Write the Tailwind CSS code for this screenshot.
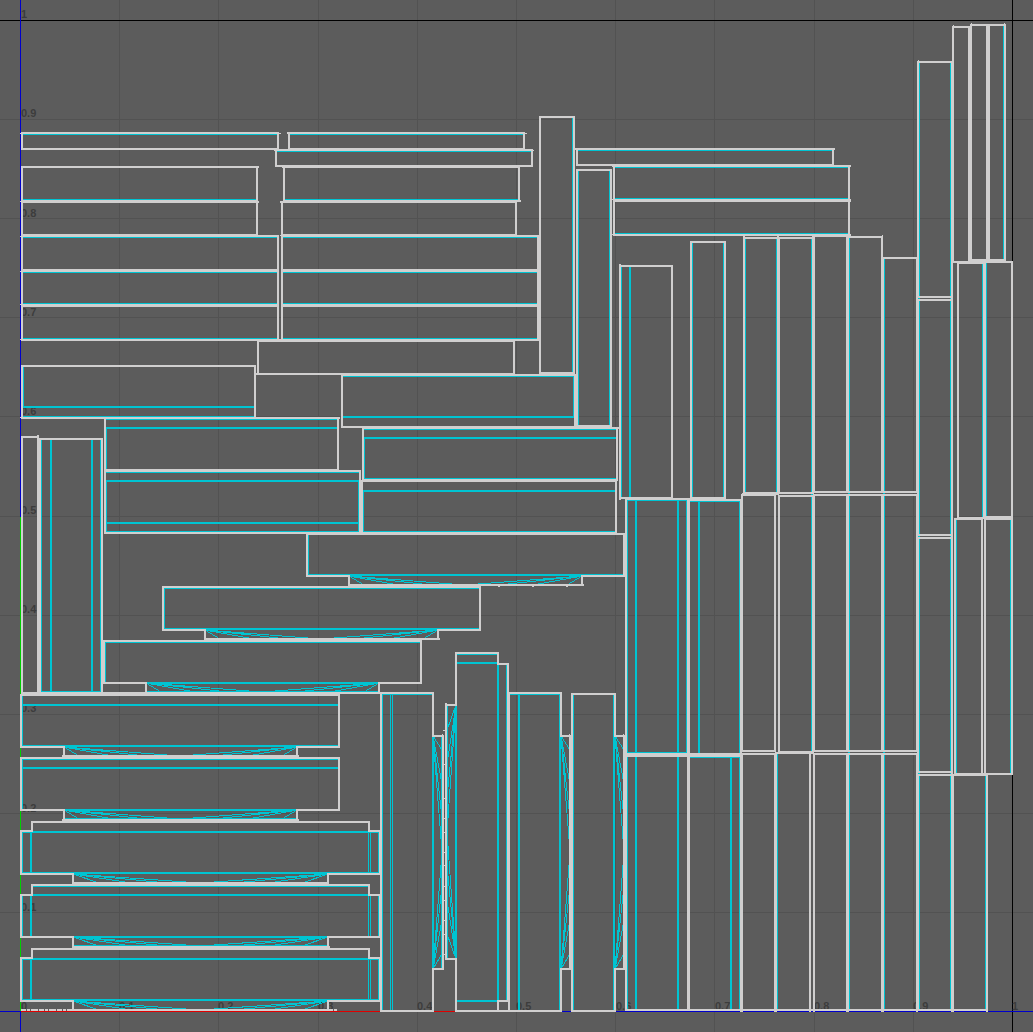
<!DOCTYPE html>
<html lang="en">
<head>
<meta charset="utf-8">
<meta name="viewport" content="width=device-width, initial-scale=1">
<title>UV Editor</title>
<script src="https://cdn.jsdelivr.net/npm/@tailwindcss/browser@4"></script>
</head>
<body class="bg-[#5c5c5c]">
<main class="w-full">
<svg class="block h-auto w-full" viewBox="0 0 1033 1032" role="img" aria-label="UV layout" shape-rendering="crispEdges" fill="none">
  <defs>
    <path id="fan" d="M0 0L15 9M0 0L49 9M0 0L82 9M0 0L116 9M0 0L40 4M233 0L218 9M233 0L184 9M233 0L150 9M233 0L116 9M233 0L193 4"/>
    <path id="fan-wide" d="M0 0L26 9M0 0L59 9M0 0L94 9M0 0L127 9M0 0L40 3M255 0L229 9M255 0L195 9M255 0L161 9M255 0L127 9M255 0L215 3"/>
    <path id="fan-side" d="M0 0L9 14M0 0L9 48M0 0L9 82M0 0L9 116M0 0L4 40M0 233L9 218M0 233L9 184M0 233L9 150M0 233L9 116M0 233L4 193"/>
  </defs>

  <!-- grid -->
  <path class="fill-[#525252]" d="M119 0h1v1032h-1zM218 0h1v1032h-1zM318 0h1v1032h-1zM417 0h1v1032h-1zM516 0h1v1032h-1zM615 0h1v1032h-1zM714 0h1v1032h-1zM814 0h1v1032h-1zM913 0h1v1032h-1zM0 119h1033v1h-1033zM0 218h1033v1h-1033zM0 317h1033v1h-1033zM0 416h1033v1h-1033zM0 516h1033v1h-1033zM0 615h1033v1h-1033zM0 714h1033v1h-1033zM0 813h1033v1h-1033zM0 912h1033v1h-1033z"/>
  <path class="fill-black" d="M0 20h1033v1h-1033zM1012 0h1v1032h-1z"/>

  <!-- axis labels -->
  <g class="fill-[#3c3c3c] font-['Liberation_Sans',sans-serif] text-[11px] font-bold" stroke="none">
    <text x="21" y="18">1</text><text x="21" y="117">0.9</text><text x="21" y="217">0.8</text><text x="21" y="316">0.7</text><text x="21" y="415">0.6</text><text x="21" y="514">0.5</text><text x="21" y="613">0.4</text><text x="21" y="712">0.3</text><text x="21" y="812">0.2</text><text x="21" y="911">0.1</text>
    <text x="21" y="1010">0</text><text x="119" y="1010">0.1</text><text x="218" y="1010">0.2</text><text x="318" y="1010">0.3</text><text x="417" y="1010">0.4</text><text x="516" y="1010">0.5</text><text x="616" y="1010">0.6</text><text x="715" y="1010">0.7</text><text x="814" y="1010">0.8</text><text x="913" y="1010">0.9</text><text x="1012" y="1010">1</text>
  </g>

  <!-- axes -->
  <path class="fill-[#0000cc]" d="M20 0h1v517h-1zM20 1011h1v21h-1zM0 1011h20v1h-20zM517 1011h516v1h-516z"/>
  <path class="fill-[#00d000]" d="M20 517h1v494h-1z"/>
  <path class="fill-[#e00000]" d="M21 1011h496v1h-496z"/>

  <!-- interior edges -->
  <g class="stroke-[#00c4d2]" stroke-width="2">
    <path d="M22 134H278M22 200H257M22 237H278M22 272H278M22 304H278M22 339H278M289 134H524M276 151H532M284 200H519M282 237H538M282 272H538M282 304H538M282 339H538M573 117V373M577 150H833M578 170V426M610 170V426M614 167H849M614 199H849M614 234H849"/>
    <path d="M23 366V407M22 407H255M22 417H255M105 419H338M105 428H338M106 428V470M105 472H360M105 481H360M105 523H360M105 532H360M106 481V533M359 481V533M342 376H575M342 417H575M574 375V417M363 429H617M363 438H617M363 479H617M364 438V480M362 491H616M362 532H616M363 491V533"/>
    <path d="M41 439V693M51 439V692M92 439V692M101 439V693M40 692H102M308 534V576M307 575H624M164 587V630M163 588H480M163 629H480M105 641V683M104 642H421M104 683H421M146 692H379"/>
    <path d="M22 695V747M21 705H339M21 746H339M22 758V810M21 759H339M21 768H339M21 810H339M64 819H297"/>
    <path d="M21 832H380M22 832V874M31 832V874M369 832V874M370 832V874M379 832V874M21 873H380M32 886H369M21 895H380M22 895V937M31 895V937M369 895V937M370 895V937M379 895V937M21 937H380M73 946H328M21 959H380M22 959V1001M31 959V1001M369 959V1001M370 959V1001M379 959V1001M21 1000H380"/>
    <path d="M382 693V1011M391 693V1011M392 693V1011M381 694H433M433 736V970M442 736V969M456 654H498M456 663H498M456 705V959M447 705V959M498 664V1001M507 664V1001M456 1001H498M509 694H561M519 693V1011M560 694V1011M573 694V1011M614 694V1011"/>
    <path d="M621 266V498M630 266V498M692 242V498M724 242V498M745 238V493M777 238V493M812 238V752M849 237V1010M884 258V1010M627 499V1010M636 499V1010M678 499V1010M687 499V754M626 500H688M626 753H688M689 501H741M699 500V754M740 500V1010M689 757H741M731 756V1010M777 754V1010"/>
    <path d="M919 62V1010M951 62V1010M1004 25V260M983 263V517M986 263V517M956 519V774M1011 519V774M986 775V1010"/>
  </g>
  <path class="fill-[#5c5c5c]" d="M391 695h1v315h-1zM369 833h1v39h-1zM369 896h1v40h-1zM369 960h1v39h-1z"/>

  <!-- triangulated skirts -->
  <g class="stroke-[#00c4d2]" stroke-width="1">
    <use href="#fan" x="349" y="576"/><use href="#fan" x="205" y="630"/><use href="#fan" x="146" y="683"/><use href="#fan" x="64" y="747"/><use href="#fan" x="64" y="810"/>
    <use href="#fan-wide" x="73" y="874"/><use href="#fan-wide" x="73" y="937"/><use href="#fan-wide" x="73" y="1001"/>
    <use href="#fan-side" x="433" y="736"/><use href="#fan-side" x="561" y="736"/><use href="#fan-side" x="615" y="736"/>
    <path d="M456 705L447 730M456 705L447 764M456 705L447 798M456 705L447 832M456 705L452 745M456 959L447 934M456 959L447 900M456 959L447 865M456 959L447 832M456 959L452 919"/>
  </g>

  <!-- shell borders -->
  <g class="stroke-[#d0cfcf]" stroke-width="2">
    <path d="M22 133H278V149H22ZM22 167H257V201H22ZM22 202H257V235H22ZM22 236H278V270H22ZM22 271H278V305H22ZM22 306H278V340H22ZM289 133H524V149H289ZM276 150H532V166H276ZM284 167H519V201H284ZM282 202H516V235H282ZM282 236H538V270H282ZM282 271H538V305H282ZM282 306H538V340H282ZM278 340H282"/>
    <path d="M540 117H574V373H540ZM577 149H833V165H577ZM577 170H611V426H577ZM614 166H849V200H614ZM614 201H849V235H614ZM258 341H514V374H258ZM22 366H255V418H22ZM105 418H338V470H105ZM255 418H340M255 374H342M105 471H360V533H105ZM342 375H575V427H342ZM574 149H577M575 427H612M363 428H617V480H363ZM617 428H620M362 481H616V533H362Z"/>
    <path d="M22 437H38V693H22ZM40 439H102V693H40ZM307 534H624V576H582V585H349V576H307ZM163 587H480V630H438V639H205V630H163ZM104 641H421V683H379V693H146V683H104ZM102 683H104V641M21 693H381"/>
    <path d="M21 695H339V747H297V756H64V747H21ZM21 758H339V810H297V820H64V810H21ZM32 822H369V831H380V874H328V883H73V874H21V831H32ZM32 885H369V895H380V937H328V947H73V937H21V895H32ZM32 949H369V958H380V1001H328V1010H73V1001H21V958H32Z"/>
    <path d="M381 693H433V736H443V969H433V1011H381ZM456 653H498V664H508V1001H498V1011H456V959H446V705H456ZM498 1001V1011H509V693H561V736H570V969H561V1011H509M572 694H615V736H624V969H615V1011H572ZM571 736V969M625 736V969"/>
    <path d="M620 266H672V498H620ZM691 242H725V498H691ZM744 238H778V493H744ZM779 238H813V493H779ZM814 236H847V492H814ZM848 237H882V492H848ZM883 258H917V492H883ZM744 235V238M778 235V238M813 235V238"/>
    <path d="M626 499H688V754H626ZM689 500H741V754H689ZM742 495H775V751H742ZM779 496H813V752H779ZM814 495H847V751H814ZM848 495H882V751H848ZM883 495H917V751H883ZM742 494H779M672 499H691"/>
    <path d="M626 756H688V1010H626ZM689 756H741V1010H689ZM742 754H775V1010H742ZM776 753H810V1010H776ZM814 754H847V1010H814ZM848 754H882V1010H848ZM883 754H917V1010H883ZM810 1010H814M810 753H814"/>
    <path d="M918 62H952V297H918ZM918 300H952V535H918ZM918 538H952V772H918ZM918 775H952V1010H918ZM953 27H969V262H953ZM971 25H987V260H971ZM989 25H1005V260H989ZM970 27V262M988 25V262M953 262H1012V517H985V262M958 263H984V518H958ZM955 519H982V774H955ZM985 519H1012V774H985ZM953 775H987V1010H953ZM982 774H985M952 297V300M952 535V538M952 772V775"/>
    <path d="M741 1010V1012M742 1010V1012M775 1010V1012M776 1010V1012M810 1010V1012M814 1010V1012M847 1010V1012M848 1010V1012M882 1010V1012M883 1010V1012M917 1010V1012M952 1010V1012M953 1010V1012M987 1010V1012"/>
    <path stroke-dasharray="5 1 3 1 7 1" d="M21 1010H72M328 1010H337"/>
    <path d="M444 730V731M444 764V765M444 798V799M444 818V819M444 832V833M444 852V853M444 865V866M444 886V887M444 900V901M444 920V921M444 934V935M444 954V955M499 585V587M533 585V587M567 585V587"/>
  </g>

  <!-- border overshoot at shell corners -->
  <path class="fill-[#d0cfcf]" d="M20 133h2v1h-2zM20 201h2v1h-2zM20 236h2v1h-2zM20 271h2v1h-2zM20 304h2v1h-2zM20 339h2v1h-2zM20 417h2v1h-2zM279 133h2v1h-2zM287 132h2v2h-2zM525 133h2v1h-2zM533 150h1v1h-1zM274 150h2v1h-2zM282 166h2v2h-2zM520 200h1v2h-1zM258 166h1v2h-1zM258 201h1v2h-1zM280 201h2v2h-2zM280 235h2v1h-2zM834 148h1v2h-1zM850 165h1v2h-1zM850 199h1v3h-1zM850 234h1v2h-1zM612 166h2v1h-2zM612 199h2v1h-2zM612 234h2v1h-2zM37 435h2v2h-2zM583 584h1v2h-1zM439 638h1v2h-1zM62 755h2v2h-2zM298 755h1v2h-1zM62 819h2v2h-2zM298 819h1v2h-1zM72 946h1v2h-1zM329 946h1v2h-1zM445 703h2v2h-2zM442 734h1v2h-1zM569 734h1v2h-1zM623 734h1v2h-1zM619 264h2v2h-2zM619 498h2v2h-2zM882 235h1v2h-1zM918 60h1v2h-1zM953 25h1v2h-1zM971 23h1v2h-1zM1004 23h1v2h-1z"/>
</svg>
</main>
</body>
</html>
